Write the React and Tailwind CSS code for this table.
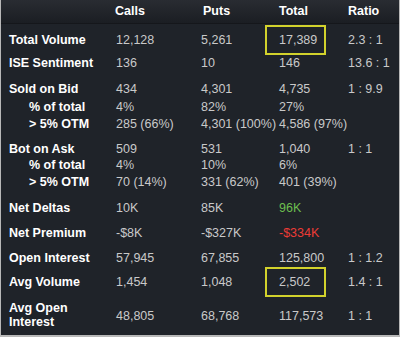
const rows = [
  { label: "Total Volume", mt: "mt-[7px]", h: "h-[18px]", v: ["12,128", "5,261", "17,389", "2.3 : 1"], box: true },
  { label: "ISE Sentiment", mt: "mt-[5px]", h: "h-[18px]", v: ["136", "10", "146", "13.6 : 1"] },
  { label: "Sold on Bid", mt: "mt-[8px]", h: "h-[18px]", v: ["434", "4,301", "4,735", "1 : 9.9"] },
  { label: "% of total", sub: true, mt: "mt-0", h: "h-[17px]", v: ["4%", "82%", "27%", ""] },
  { label: "> 5% OTM", sub: true, mt: "mt-0", h: "h-[18px]", v: ["285 (66%)", "4,301 (100%)", "4,586 (97%)", ""] },
  { label: "Bot on Ask", mt: "mt-[7px]", h: "h-[17px]", v: ["509", "531", "1,040", "1 : 1"] },
  { label: "% of total", sub: true, mt: "mt-0", h: "h-[16px]", v: ["4%", "10%", "6%", ""] },
  { label: "> 5% OTM", sub: true, mt: "mt-0", h: "h-[18px]", v: ["70 (14%)", "331 (62%)", "401 (39%)", ""] },
  { label: "Net Deltas", mt: "mt-[8px]", h: "h-[18px]", v: ["10K", "85K", "96K", ""], totalClass: "text-[#6cbf4f]" },
  { label: "Net Premium", mt: "mt-[7px]", h: "h-[18px]", v: ["-$8K", "-$327K", "-$334K", ""], totalClass: "text-[#ec3b36]" },
  { label: "Open Interest", mt: "mt-[7px]", h: "h-[18px]", v: ["57,945", "67,855", "125,800", "1 : 1.2"] },
  { label: "Avg Volume", mt: "mt-[6px]", h: "h-[18px]", v: ["1,454", "1,048", "2,502", "1.4 : 1"], box: true },
];

function Row({ r }) {
  return (
    <div className={`flex items-center ${r.mt} ${r.h} leading-[18px]`}>
      <div className={`w-[115px] shrink-0 font-bold text-white ${r.sub ? "pl-[28px]" : "pl-[8px]"}`}>
        {r.label}
      </div>
      <div className="w-[85px] shrink-0 text-[#c9c9c9]">{r.v[0]}</div>
      <div className="w-[78px] shrink-0 text-[#c9c9c9]">{r.v[1]}</div>
      <div className={`relative w-[69px] shrink-0 ${r.totalClass || "text-[#c9c9c9]"}`}>
        {r.box && (
          <span className="absolute left-[-14px] top-[-6px] h-[30px] w-[61px] border-2 border-[#d2d22c]" />
        )}
        {r.v[2]}
      </div>
      <div className="text-[#c9c9c9]">{r.v[3]}</div>
    </div>
  );
}

export default function App() {
  return (
    <div className="w-[400px] h-[337px] bg-[#1f2329] border-x border-b-2 border-[#b8b8b8] overflow-hidden text-[12.5px] font-['Liberation_Sans',Arial,sans-serif]">
      <div className="flex items-center h-[24px] bg-gradient-to-b from-[#292c32] to-[#1b1e23] border-b border-[#15171b] font-bold text-white">
        <div className="w-[114px] shrink-0" />
        <div className="w-[88px] shrink-0">Calls</div>
        <div className="w-[76px] shrink-0">Puts</div>
        <div className="w-[69px] shrink-0">Total</div>
        <div>Ratio</div>
      </div>
      {rows.map((r, i) => (
        <Row key={i} r={r} />
      ))}
      <div className="flex items-center mt-[9px] h-[30px]">
        <div className="w-[115px] shrink-0 pl-[8px] font-bold text-white leading-[14px]">
          Avg Open
          <br />
          Interest
        </div>
        <div className="w-[85px] shrink-0 text-[#c9c9c9] pt-[2px]">48,805</div>
        <div className="w-[78px] shrink-0 text-[#c9c9c9] pt-[2px]">68,768</div>
        <div className="w-[69px] shrink-0 text-[#c9c9c9] pt-[2px]">117,573</div>
        <div className="text-[#c9c9c9] pt-[2px]">1 : 1</div>
      </div>
    </div>
  );
}
